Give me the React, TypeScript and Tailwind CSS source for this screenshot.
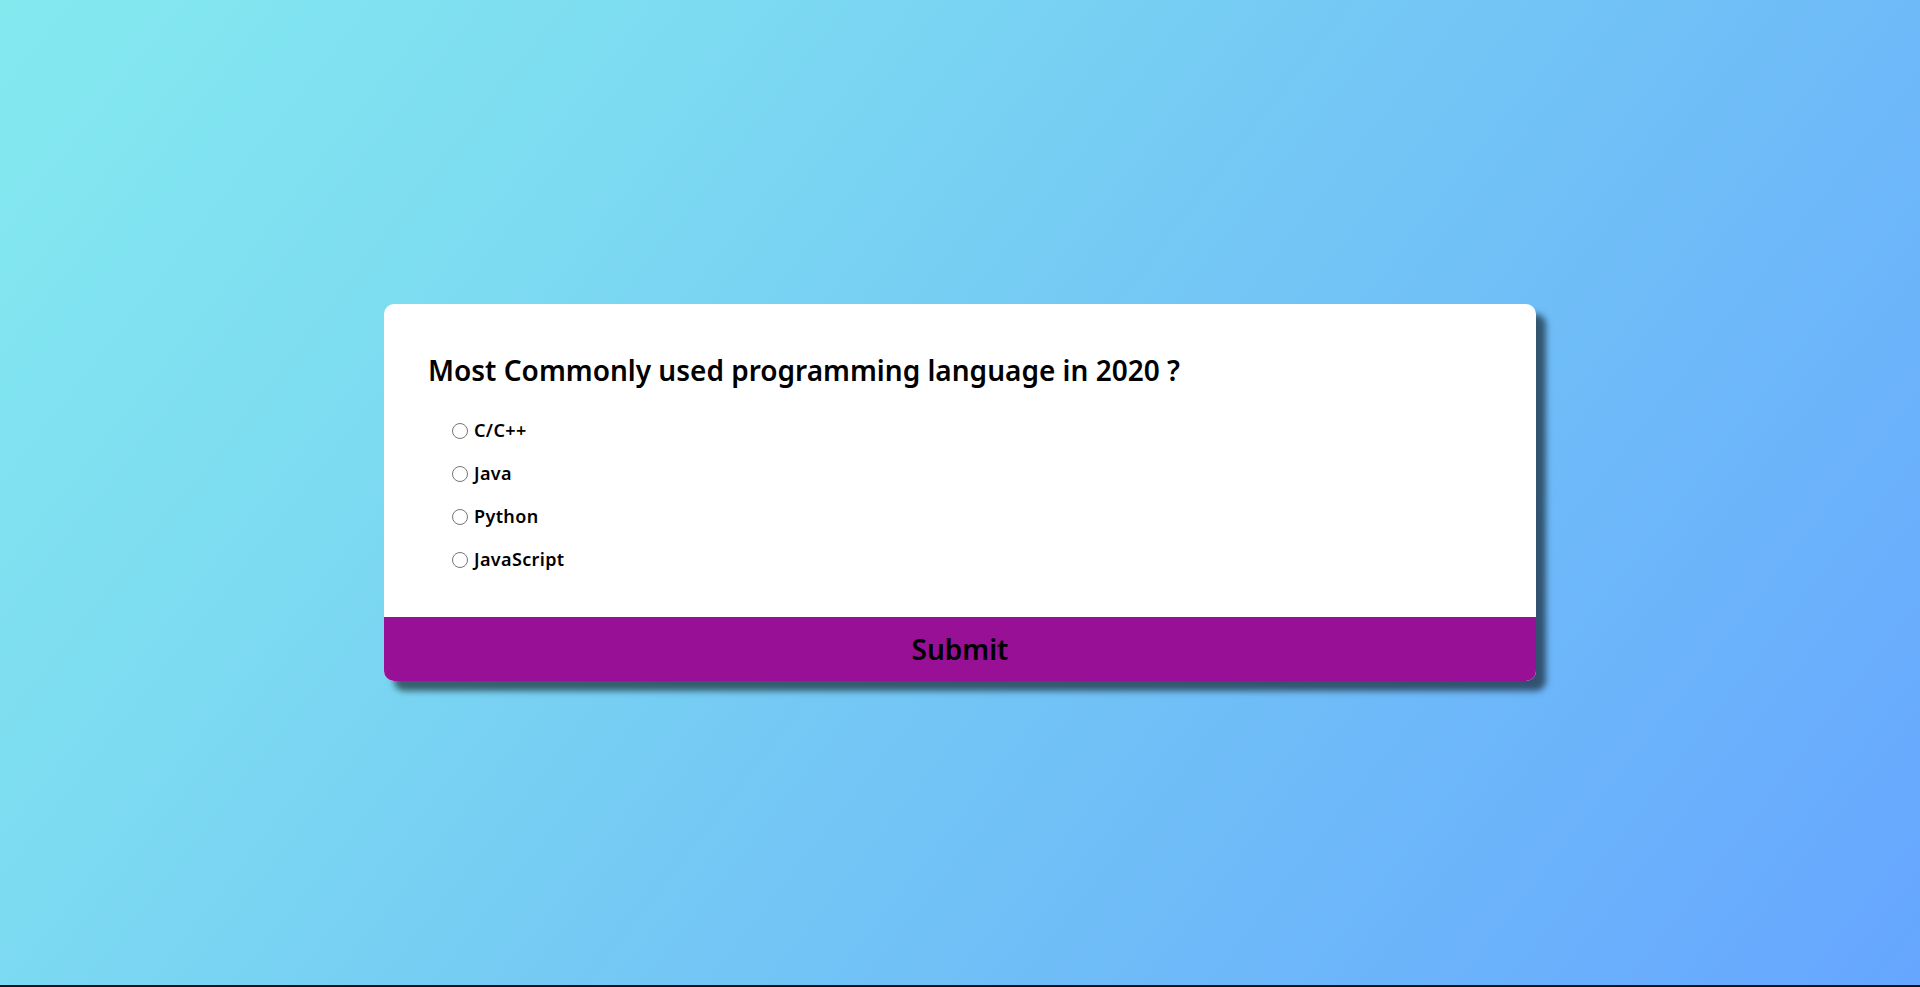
import { useState } from "react";

const options = ["C/C++", "Java", "Python", "JavaScript"];

export default function App() {
  const [picked, setPicked] = useState<string | null>(null);

  return (
    <div className="min-h-screen bg-[#0b1620]">
      <main className="flex h-[985px] items-center justify-center bg-[linear-gradient(128deg,#84e9ef_0%,#7ddcf1_25%,#74c9f4_50%,#66a6ff_100%)] font-['Noto_Sans',sans-serif]">
        <div className="w-[60%] overflow-hidden rounded-[10px] bg-white shadow-[10px_10px_6px_rgba(0,0,0,0.55)]">
          <div className="px-[44px] pt-[48px] pb-[45px]">
            <h2 className="text-[28px] leading-[36px] font-semibold text-black">
              Most Commonly used programming language in 2020 ?
            </h2>
            <ul className="mt-[30px] flex flex-col gap-[18px] pl-[24px]">
              {options.map((opt) => (
                <li key={opt} className="flex h-[25px] items-center">
                  <input
                    type="radio"
                    name="answer"
                    id={opt}
                    checked={picked === opt}
                    onChange={() => setPicked(opt)}
                    className="m-0 h-[16px] w-[16px] accent-purple-700"
                  />
                  <label htmlFor={opt} className="ml-[6px] text-[18px] font-semibold tracking-[0.02em] text-black">
                    {opt}
                  </label>
                </li>
              ))}
            </ul>
          </div>
          <button className="block h-[64px] w-full bg-[#971096] text-[28px] font-semibold text-black">
            Submit
          </button>
        </div>
      </main>
    </div>
  );
}
